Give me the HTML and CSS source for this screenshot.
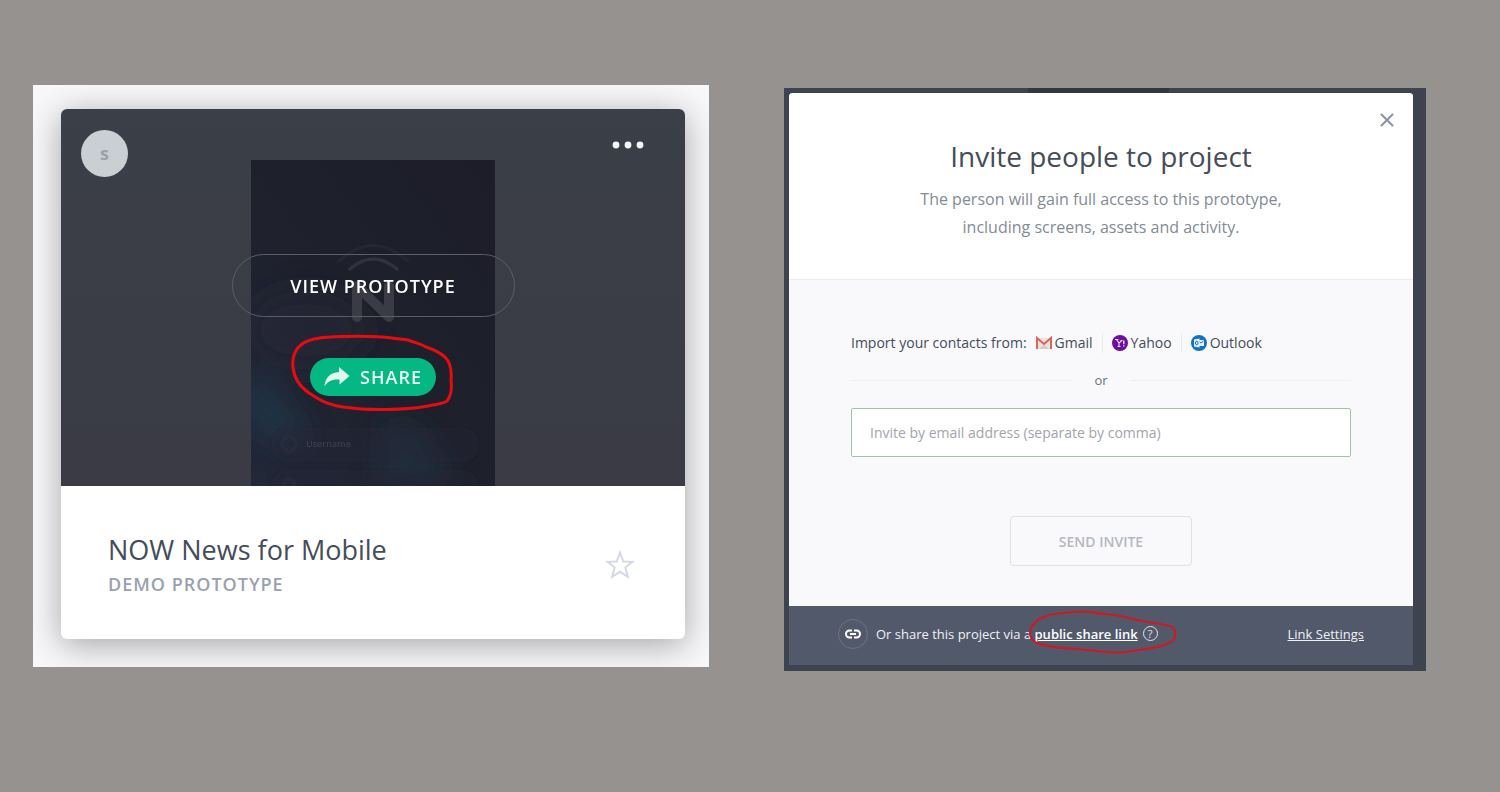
FILE: index.html
```
<!DOCTYPE html>
<html lang="en">
<head>
    <meta charset="UTF-8">
    <meta name="viewport" content="width=device-width, initial-scale=1.0">
    <title>Share a prototype</title>
    <link rel="stylesheet" href="styles.css">
</head>
<body>
    <main class="steps">
        <section class="step-card">
            <article class="card">
                <div class="preview">
                    <!-- Dimmed phone screen behind the buttons -->
                    <svg class="phone" viewBox="0 0 244 326" preserveAspectRatio="xMidYMin slice" aria-hidden="true">
                        <defs>
                            <linearGradient id="screen" x1="1" y1="0" x2="0" y2="1">
                                <stop offset="0" stop-color="#1c1d28"/>
                                <stop offset="0.5" stop-color="#1e202b"/>
                                <stop offset="1" stop-color="#222838"/>
                            </linearGradient>
                            <filter id="soft" x="-50%" y="-50%" width="200%" height="200%">
                                <feGaussianBlur stdDeviation="14"/>
                            </filter>
                            <filter id="faint">
                                <feGaussianBlur stdDeviation="1"/>
                            </filter>
                        </defs>
                        <rect width="244" height="326" fill="url(#screen)"/>
                        <g filter="url(#soft)">
                            <path d="M-6 220L10 215L58 275L44 290L-6 262Z" fill="#22394a" opacity="0.8"/>
                            <path d="M128 270L160 260L205 320L130 326Z" fill="#203545" opacity="0.6"/>
                            <ellipse cx="55" cy="170" rx="60" ry="40" fill="#242a36" opacity="0.6"/>
                        </g>
                        <g fill="none" stroke="#31323b" stroke-linecap="round">
                            <path d="M88 101Q122 70 157 101" stroke-width="3" opacity="0.4"/>
                            <path d="M99 109Q122 89 146 109" stroke-width="3.500"/>
                            <path d="M106 157V126L138 157V126" stroke="#3a3b45" stroke-width="10" stroke-linejoin="round"/>
                        </g>
                        <g filter="url(#faint)">
                            <rect x="20" y="268" width="208" height="34" rx="17" fill="#262b37" opacity="0.4"/>
                            <rect x="20" y="310" width="208" height="34" rx="17" fill="#262b37" opacity="0.4"/>
                            <circle cx="38" cy="284" r="7" fill="none" stroke="#2d323d" stroke-width="1.500"/>
                            <circle cx="38" cy="324" r="5" fill="none" stroke="#2d323d" stroke-width="1.500"/>
                        </g>
                        <text class="phone-label" x="55" y="287">Username</text>
                    </svg>
                    <div class="preview-top">
                        <span class="avatar">s</span>
                        <button class="more" aria-label="More">
                            <svg width="32" height="8" viewBox="0 0 32 8">
                                <circle cx="4" cy="4" r="3.400"/>
                                <circle cx="16" cy="4" r="3.400"/>
                                <circle cx="28" cy="4" r="3.400"/>
                            </svg>
                        </button>
                    </div>
                    <button class="view">VIEW PROTOTYPE</button>
                    <div class="marked">
                        <button class="share">
                            <svg width="26" height="20" viewBox="0 0 26 20">
                                <path d="M15 0L25.500 9L15.500 17.500V12.500C8 12 3.500 14 0.500 19.500C1 11 6 5.500 15 5Z"/>
                            </svg>
                            SHARE
                        </button>
                        <svg class="marker marker-share" width="164" height="80" viewBox="0 0 164 80">
                            <path d="M102 4C88 2 70 2 52 2.500C34 3 20 4 12 10C4 16 2 24 3 33C4 44 9 52 19 59C28 65 35 70 53 73C80 77 115 76 138 72C146 70 154 70 157 67C161 62 162 54 161 46C162 35 160 28 155 23C148 17 142 15 136 13C130 9 125 9 118 6C112 5 106 5 102 4Z"/>
                        </svg>
                    </div>
                </div>
                <div class="info">
                    <div>
                        <h2 class="card-title">NOW News for Mobile</h2>
                        <p class="card-kind">DEMO PROTOTYPE</p>
                    </div>
                    <button class="star" aria-label="Favourite">
                        <svg width="30" height="32" viewBox="0 0 30 32">
                            <path d="M15 4.500L18.300 13.500L27.500 13.800L20.300 19.500L22.900 28.800L15 23.800L7.100 28.800L9.700 19.500L2.500 13.800L11.700 13.500Z"/>
                        </svg>
                    </button>
                </div>
            </article>
        </section>

        <section class="step-modal">
            <div class="modal">
                <header class="modal-head">
                    <button class="close" aria-label="Close">
                        <svg width="14" height="14" viewBox="0 0 14 14">
                            <path d="M1.500 1.500L12.500 12.500M12.500 1.500L1.500 12.500"/>
                        </svg>
                    </button>
                    <h1 class="modal-title">Invite people to project</h1>
                    <p class="modal-text">The person will gain full access to this prototype,<br>including screens, assets and activity.</p>
                </header>
                <form class="modal-body">
                    <div class="import">
                        <span class="import-label">Import your contacts from:</span>
                        <a class="source" href="#">
                            <svg width="16" height="16" viewBox="0 0 16 16">
                                <path d="M1 3H15V14H1Z" fill="#e9e3dc"/>
                                <path d="M3 14L8 9.500L13 14Z" fill="#d5ccc4"/>
                                <path d="M1 14V3L8 9L15 3V14" fill="none" stroke="#d9655c" stroke-width="2"/>
                            </svg>
                            Gmail
                        </a>
                        <a class="source" href="#">
                            <svg width="16" height="16" viewBox="0 0 16 16">
                                <circle cx="8" cy="8" r="8" fill="#6b0fa0"/>
                                <path d="M3 4.500H6.500M4.500 4.500L7 8L9.500 6M7 8V11.500M5.500 11.500H8.500M8.500 5.500H10.500" fill="none" stroke="#e9d9f2" stroke-width="1.200"/>
                                <path d="M11.800 5.500V9.300M11.800 10.300V11.500" fill="none" stroke="#e9d9f2" stroke-width="1.500"/>
                            </svg>
                            Yahoo
                        </a>
                        <a class="source" href="#">
                            <svg width="16" height="16" viewBox="0 0 16 16">
                                <circle cx="8" cy="8" r="8" fill="#1073c6"/>
                                <path d="M7 5H13V11H7Z" fill="#e6f1fa"/>
                                <path d="M7.500 6L10 8L12.500 6" fill="none" stroke="#1073c6"/>
                                <path d="M3 4.500L8.500 3.500V12.500L3 11.500Z" fill="#e6f1fa"/>
                                <ellipse cx="5.700" cy="8" rx="1.300" ry="1.800" fill="none" stroke="#1073c6"/>
                            </svg>
                            Outlook
                        </a>
                    </div>
                    <div class="or">or</div>
                    <input class="email" type="text" aria-label="Invite by email address" placeholder="Invite by email address (separate by comma)">
                    <button class="send" type="button">SEND INVITE</button>
                </form>
                <footer class="modal-foot">
                    <span class="link-icon">
                        <svg width="16" height="10" viewBox="0 0 16 10">
                            <path d="M7 1.500H4.500A3.500 3.500 0 0 0 4.500 8.500H7M9 1.500H11.500A3.500 3.500 0 0 1 11.500 8.500H9M5 5H11"/>
                        </svg>
                    </span>
                    <p class="foot-text">Or share this project via a
                        <span class="marked"><a class="public" href="#">public share link</a>
                            <svg class="marker marker-link" width="150" height="48" viewBox="0 0 150 48">
                                <path d="M73 6C65 3 50 3 36 5C22 6 11 10 6 17C1 24 2 31 10 35C20 40 40 40 60 42C80 44 92 46 105 43C118 41 129 40 137 37C144 34 148 33 148 27C149 21 146 18 138 17C128 15 112 13 98 9C86 6 78 7 66 4"/>
                            </svg>
                        </span>
                    </p>
                    <button class="help" aria-label="Help">?</button>
                    <a class="settings" href="#">Link Settings</a>
                </footer>
            </div>
        </section>
    </main>
</body>
</html>
```
FILE: styles.css
```
* {
    box-sizing: border-box;
}
body {
    margin: 0;
    background-color: #969290;
    font-family: "Open Sans", "Noto Sans", sans-serif;
    color: #454c5a;
}
h1, h2, p {
    margin: 0;
    font-weight: 400;
}
button {
    padding: 0;
    border: none;
    background: none;
    font-family: inherit;
    cursor: pointer;
}
svg {
    display: block;
}
.steps {
    display: grid;
    grid-template-columns: 676fr 642fr;
    align-items: start;
    gap: 75px;
    padding: 85px 74px 40px 33px;
}
.step-card {
    overflow: hidden;
    padding: 24px 24px 28px 28px;
    background-color: #f8f8fa;
}
.step-modal {
    margin-top: 3px;
    padding: 5px 13px 6px 5px;
    background: linear-gradient(90deg, transparent 38%, #323842 38%, #323842 60%, transparent 60%) 0 0 / 100% 5px no-repeat #3d434f;
}

/* Project card */
.card {
    border-radius: 6px;
    background-color: #fff;
    box-shadow: 0 6px 34px rgba(0, 0, 0, 0.34);
}
.preview {
    position: relative;
    display: flex;
    flex-direction: column;
    align-items: center;
    padding-bottom: 90px;
    border-radius: 6px 6px 0 0;
    background: linear-gradient(#3b3f48, #3a3b44);
}
.phone {
    position: absolute;
    top: 51px;
    bottom: 0;
    left: 0;
    right: 0;
    margin: 0 auto;
    width: 244px;
    height: 326px;
}
.phone-label {
    font-size: 9px;
    font-weight: 600;
    fill: #3a3f4a;
}
.preview-top {
    align-self: stretch;
    display: flex;
    justify-content: space-between;
    align-items: flex-start;
    padding: 21px 41px 0 20px;
    margin-bottom: 77px;
}
.avatar {
    width: 47px;
    height: 47px;
    border-radius: 50%;
    background-color: #cacfd3;
    color: #9da1a8;
    font-size: 18px;
    font-weight: 700;
    line-height: 47px;
    text-align: center;
}
.more {
    margin-top: 11px;
}
.more svg {
    fill: #f5f6fa;
}
.view {
    position: relative;
    width: 283px;
    height: 63px;
    border: 1px solid #5c5e67;
    border-radius: 32px;
    color: #fff;
    font-size: 18px;
    font-weight: 600;
    letter-spacing: 1px;
}
.marked {
    position: relative;
}
.preview .marked {
    margin-top: 41px;
}
.share {
    display: flex;
    align-items: center;
    gap: 10px;
    height: 38px;
    padding: 0 14px;
    border-radius: 19px;
    background-color: #04b783;
    color: #e9fbf4;
    font-size: 18px;
    font-weight: 600;
    letter-spacing: 1px;
}
.share svg {
    fill: #e0f7ee;
}
.marker {
    position: absolute;
    fill: none;
    stroke: #e80c10;
    stroke-width: 3;
    stroke-linejoin: round;
    pointer-events: none;
}
.marker-share {
    top: -24px;
    left: -20px;
}
.marker-link {
    top: -17px;
    left: -8px;
    stroke: #d3171f;
    stroke-width: 2;
}
.info {
    display: flex;
    justify-content: space-between;
    align-items: center;
    padding: 44px 50px 41px 47px;
}
.card-title {
    font-size: 27px;
    line-height: 40px;
}
.card-kind {
    color: #9aa1b0;
    font-size: 18px;
    font-weight: 600;
    line-height: 28px;
    letter-spacing: 1px;
}
.star svg {
    fill: none;
    stroke: #d5d8e4;
    stroke-width: 2;
}

/* Invite dialog */
.modal {
    overflow: hidden;
    border-radius: 4px 4px 0 0;
    background-color: #f9f9fc;
}
.modal-head {
    position: relative;
    padding: 44px 20px 38px;
    border-bottom: 1px solid #ebecf0;
    background-color: #fff;
    text-align: center;
}
.close {
    position: absolute;
    top: 20px;
    right: 19px;
}
.close svg {
    fill: none;
    stroke: #8993a0;
    stroke-width: 2;
    stroke-linecap: round;
}
.modal-title {
    font-size: 28px;
    line-height: 38px;
}
.modal-text {
    margin-top: 10px;
    color: #838b94;
    font-size: 16px;
    line-height: 28px;
}
.modal-body {
    display: flex;
    flex-direction: column;
    padding: 53px 62px 40px;
    font-size: 14px;
    line-height: 20px;
}
.import {
    display: flex;
}
.source {
    display: flex;
    align-items: center;
    gap: 3px;
    padding: 0 9px;
    color: inherit;
    text-decoration: none;
}
.source + .source {
    border-left: 1px solid #e9ebef;
}
.or {
    display: flex;
    align-items: center;
    gap: 22px;
    margin-top: 17px;
    color: #6b727e;
    font-size: 13px;
}
.or::before,
.or::after {
    content: "";
    flex: 1;
    height: 1px;
    background-color: #eeeff2;
}
.email {
    height: 49px;
    margin-top: 18px;
    padding: 0 18px;
    border: 1px solid #9cc5a6;
    border-radius: 2px;
    background-color: #fff;
    font-family: inherit;
    font-size: 14px;
}
.email::placeholder {
    color: #a1a5ab;
}
.send {
    align-self: center;
    width: 182px;
    height: 50px;
    margin-top: 59px;
    border: 1px solid #dfe1e6;
    border-radius: 4px;
    color: #b4b8bf;
    font-size: 14px;
    font-weight: 600;
}
.modal-foot {
    display: flex;
    align-items: center;
    height: 59px;
    padding: 0 49px 4px;
    background-color: #51596b;
    color: #f0f1f5;
    font-size: 13px;
    line-height: 20px;
}
.link-icon {
    display: flex;
    align-items: center;
    justify-content: center;
    width: 30px;
    height: 30px;
    margin-right: 8px;
    border: 1px solid #6b7384;
    border-radius: 50%;
}
.link-icon svg {
    fill: none;
    stroke: #fff;
    stroke-width: 2;
}
.public {
    color: #fff;
    font-weight: 600;
}
.help {
    width: 15px;
    height: 15px;
    margin-left: 5px;
    border: 1px solid #e4e6eb;
    border-radius: 50%;
    color: #e4e6eb;
    font-size: 11px;
    line-height: 13px;
}
.settings {
    margin-left: auto;
    color: inherit;
}
```
